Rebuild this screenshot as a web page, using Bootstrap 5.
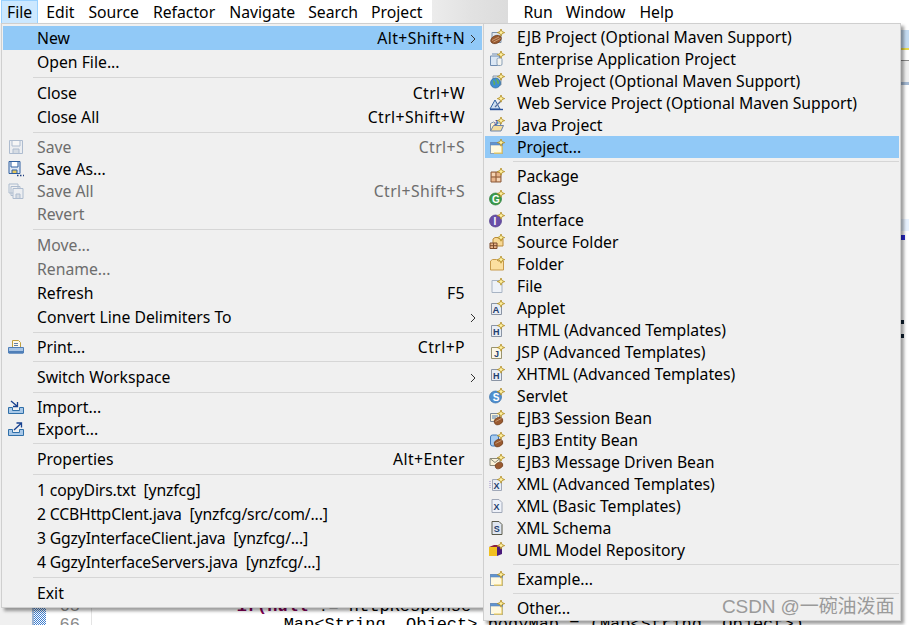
<!DOCTYPE html>
<html lang="en">
<head>
    <meta charset="UTF-8">
    <meta name="viewport" content="width=device-width, initial-scale=1.0">
    <title>Eclipse File Menu</title>
    <link href="https://cdn.jsdelivr.net/npm/bootstrap@5.3.0/dist/css/bootstrap.min.css" rel="stylesheet">
    <style>
        html, body { height: 100%; overflow: hidden; }
        body {
            background-color: #fff;
            color: #000;
            font-family: "Noto Sans", "Liberation Sans", sans-serif;
            font-size: 15.75px;
        }
        .stage { width: 909px; height: 625px; overflow: hidden; }

        /* menu bar */
        .menubar { height: 23px; background: #fff; line-height: 25px; }
        .bar-item { margin-left: 14px; white-space: nowrap; }
        .bar-tight { margin-left: 13px; }
        .bar-file {
            margin: 0 -6px 0 1px;
            padding: 0 5px;
            background: #cce8ff;
            border: 1px solid #99d1ff;
            border-bottom: 0;
            line-height: 23px;
            height: 23px;
        }
        .bar-gap { width: 76px; height: 23px; margin-left: 10px; margin-right: 1px; background: linear-gradient(90deg, #ececec, #e2e2e2 50%, #dcdcdc); }

        /* what is left of the workbench behind the menus */
        .bench { height: 602px; }
        .side-gray { width: 32px; background: #f0f0f0; }
        .side-dither {
            width: 14px;
            background-color: #fff;
            background-image: conic-gradient(#3f7fd0 25%, #fff 0 50%, #3f7fd0 0 75%, #fff 0);
            background-size: 2px 2px;
            border-left: 2px solid #9db4d2;
        }
        .gutter { width: 46px; border-right: 1px solid #e4e4e4; color: #8a8a8a; text-align: right; padding-right: 11px; }
        .code, .gutter { font-family: "Liberation Mono", monospace; font-size: 17px; line-height: 18px; margin-bottom: -9px; }
        .code { white-space: pre; overflow: hidden; padding-left: 8px; }
        .kw { color: #7f0055; font-weight: 700; margin-left: 4px; }
        .rstrip { width: 8px; flex: none; }
        .st-tab { height: 20px; margin-top: 7px; background: #c5dcf2; border-bottom: 2px solid #e8d94a; }
        .st-tool { height: 22px; background: #f0f0f0; border-top: 1px solid #8a8a8a; margin-top: 10px; }
        .st-edge { height: 3px; background: #a4b9d3; }
        .st-line { height: 12px; margin-top: 134px; background: #e8f2ff; }
        .st-mark { width: 4px; height: 5px; background: #2a2ad0; margin-top: 4px; }
        .st-dot { width: 3px; height: 4px; background: #123; margin-top: 80px; }
        .st-dot2 { width: 3px; height: 4px; background: #123; margin-top: 10px; }

        /* popups */
        .popup {
            position: absolute;
            top: 23px;
            background: #f0f0f0;
            border: 1px solid #cfcfcf;
            box-shadow: 3px 3px 3px rgba(0, 0, 0, .38);
            padding: 2px 1px;
        }
        .popup-file { left: 1px; width: 483px; height: 585px; }
        .popup-new { left: 483px; width: 418px; height: 598px; }
        .mrow { height: 24px; white-space: nowrap; }
        .mrow-i { height: 22px; white-space: nowrap; }
        .popup-file .mrow, .popup-file .mrow-i { padding-left: 5px; }
        .popup-new .mrow-i { padding-left: 4px; }
        .mico { width: 16px; height: 16px; flex: none; }
        .mslot { width: 16px; flex: none; }
        .mtext { margin-left: 13px; padding-top: 2px; }
        .popup-new .mtext { margin-left: 12px; }
        .mfile { letter-spacing: -.17px; }
        .mkey { margin-left: auto; padding-top: 2px; letter-spacing: .4px; }
        .marrow { width: 17px; flex: none; padding-left: 5px; }
        .mrow.sel, .mrow-i.sel { background: #91c9f7; }
        .off { color: #6d6d6d; }
        .off .mico { opacity: .45; }
        .msep { height: 7px; padding-top: 3px; margin-left: 30px; }
        .msep::before { content: ""; display: block; height: 1px; background: #d6d6d6; }
        .popup-new .msep { margin-left: 28px; }
        .icon-letter { font-family: "Liberation Sans", sans-serif; font-weight: 700; }
        .wmark {
            position: absolute;
            left: 722px;
            top: 593px;
            font-family: "Liberation Sans", "Noto Sans CJK SC", sans-serif;
            font-size: 19px;
            letter-spacing: -.1px;
            color: #9a9a9a;
            white-space: nowrap;
        }
    </style>
</head>
<body>
    <!-- icon sheet -->
    <svg width="0" height="0" class="position-absolute">
        <defs>
            <symbol id="star" viewBox="0 0 16 16"><path d="M12 0l1 2.600 2.700 1-2.700 1-1 2.600-1-2.600-2.700-1 2.700-1z" fill="#fff2a0" stroke="#b08a20" stroke-width=".8"/></symbol>
            <symbol id="bean" viewBox="0 0 16 16"><ellipse cx="7" cy="10.500" rx="5.500" ry="3.800" transform="rotate(-25 7 10.500)" fill="#9a5a30" stroke="#6a3a1a" stroke-width=".7"/><path d="M3 11.500l7-3.500M4.500 13l7-3.500" stroke="#d9b48f" stroke-width=".7"/></symbol>
            <symbol id="i-ejb" viewBox="0 0 16 16"><path d="M3 3.500h9v10H3z" fill="#dfe6ee" stroke="#7d90a8"/><use href="#bean"/><use href="#star"/></symbol>
            <symbol id="i-ear" viewBox="0 0 16 16"><path d="M1.500 5h9v9.500h-9z" fill="#dbe7f4" stroke="#6d8bb0"/><rect x="8" y="7" width="5" height="7.500" rx="1.500" fill="#f4f4f0" stroke="#8aa0b8"/><path d="M3 3h6" stroke="#6d8bb0"/><use href="#star"/></symbol>
            <symbol id="i-web" viewBox="0 0 16 16"><path d="M4 3h8v9H4z" fill="#e6e6e6" stroke="#8a98a8"/><circle cx="6.500" cy="10" r="5" fill="#3f8fd0" stroke="#2d6a9f" stroke-width=".7"/><path d="M4 7.500c2 1 2 3 1 4.500M7 6c2 1 3 3 2 5" fill="#6bb24a" stroke="#6bb24a"/><use href="#star"/></symbol>
            <symbol id="i-ws" viewBox="0 0 16 16"><path d="M1 14l5-9 5 9z" fill="#cfe0f2" stroke="#2f5f9f"/><path d="M1 14.500h13" stroke="#27509a" stroke-width="1.400"/><path d="M6 12l6-6" stroke="#5a6f9a" stroke-width="1.200"/><use href="#star"/></symbol>
            <symbol id="i-java" viewBox="0 0 16 16"><path d="M1.500 14V6.500l3-1.500 2 1h5v2" fill="#fff3cf" stroke="#7f90a8"/><path d="M1.500 14l3-5.500h10L12 14z" fill="#f5dc9a" stroke="#6d84a8"/><text x="5" y="7.500" class="icon-letter" font-size="7" fill="#1f4f9f">J</text><use href="#star"/></symbol>
            <symbol id="i-proj" viewBox="0 0 16 16"><rect x="1.500" y="3.500" width="12" height="11" fill="#fff9e0" stroke="#8aa0b8"/><path d="M1.500 3.500h12v2.500h-12z" fill="#5f94d0" stroke="#5f85b8" stroke-width=".6"/><path d="M13 7v7.200H5" fill="none" stroke="#e9c85a" stroke-width="1.200"/><use href="#star"/></symbol>
            <symbol id="i-pkg" viewBox="0 0 16 16"><path d="M2 4h10v10H2z" fill="#e8b48a" stroke="#8a5a3a"/><path d="M7 4v10M2 9h10" stroke="#8a5a3a"/><path d="M3 5h3v3H3zM8 10h3v3H8z" fill="#f4d4b4"/><use href="#star"/></symbol>
            <symbol id="i-class" viewBox="0 0 16 16"><circle cx="6.500" cy="9" r="6" fill="#3b9a4a" stroke="#2c7a3a" stroke-width=".7"/><text x="3" y="12.500" class="icon-letter" font-size="10" fill="#fff">G</text><use href="#star"/></symbol>
            <symbol id="i-iface" viewBox="0 0 16 16"><circle cx="6.500" cy="9" r="6" fill="#6a4fa8" stroke="#4f3a88" stroke-width=".7"/><text x="4.500" y="12.500" class="icon-letter" font-size="10" fill="#fff">I</text><use href="#star"/></symbol>
            <symbol id="i-src" viewBox="0 0 16 16"><path d="M4 12V5l2-1.500h3L10.500 5H14v7z" fill="#f7d894" stroke="#b98a3a"/><path d="M1 9h7v5.500H1z" fill="#e8b48a" stroke="#7a4a2a"/><path d="M4.500 9v5.500M1 11.700h7" stroke="#7a4a2a"/><use href="#star"/></symbol>
            <symbol id="i-folder" viewBox="0 0 16 16"><path d="M1.500 14V5l2-1.500h4L9 5h5.500v9z" fill="#fbdf9f" stroke="#c79a4a"/><use href="#star"/></symbol>
            <symbol id="i-file" viewBox="0 0 16 16"><path d="M3 2.500h7l3 3v9H3z" fill="#eef2f8" stroke="#a8b4c4"/><use href="#star"/></symbol>
            <symbol id="i-applet" viewBox="0 0 16 16"><path d="M2.500 3.500h10v11h-10z" fill="#e8edf4" stroke="#8a94a4"/><text x="3.500" y="12.500" class="icon-letter" font-size="9.500" fill="#24406f">A</text><use href="#star"/></symbol>
            <symbol id="i-html" viewBox="0 0 16 16"><path d="M2.500 3.500h10v11h-10z" fill="#e8edf4" stroke="#8a94a4"/><text x="4" y="12.500" class="icon-letter" font-size="9" fill="#24406f">H</text><use href="#star"/></symbol>
            <symbol id="i-jsp" viewBox="0 0 16 16"><path d="M2.500 3.500h10v11h-10z" fill="#fbf7e6" stroke="#9a9470"/><text x="5" y="12.500" class="icon-letter" font-size="9" fill="#24406f">J</text><use href="#star"/></symbol>
            <symbol id="i-servlet" viewBox="0 0 16 16"><circle cx="6.500" cy="9" r="6" fill="#4f8fd0" stroke="#3a70a8" stroke-width=".7"/><text x="3.700" y="12.700" class="icon-letter" font-size="10" fill="#fff">S</text><use href="#star"/></symbol>
            <symbol id="i-sess" viewBox="0 0 16 16"><path d="M1.500 3.500h9v8h-9z" fill="#fbf3d8" stroke="#7f8a98"/><path d="M3 6h6M3 8h4" stroke="#4f7fb8"/><ellipse cx="9.500" cy="11" rx="4.500" ry="3.500" transform="rotate(-25 9.500 11)" fill="#9a5a30" stroke="#6a3a1a" stroke-width=".6"/><path d="M6.500 11.500l6-3" stroke="#d9b48f" stroke-width=".7"/><use href="#star"/></symbol>
            <symbol id="i-ent" viewBox="0 0 16 16"><rect x="1.500" y="3" width="8" height="11" rx="2" fill="#a8ccf0" stroke="#3f78b8"/><ellipse cx="9.500" cy="11" rx="4.500" ry="3.500" transform="rotate(-25 9.500 11)" fill="#9a5a30" stroke="#6a3a1a" stroke-width=".6"/><path d="M6.500 11.500l6-3" stroke="#d9b48f" stroke-width=".7"/><use href="#star"/></symbol>
            <symbol id="i-msg" viewBox="0 0 16 16"><path d="M1 4.500h10v7H1z" fill="#fbf3d8" stroke="#8a8a7a"/><path d="M1 4.500l5 4 5-4" fill="none" stroke="#8a8a7a"/><ellipse cx="10" cy="11.500" rx="4" ry="3" transform="rotate(-25 10 11.500)" fill="#9a5a30" stroke="#6a3a1a" stroke-width=".6"/><use href="#star"/></symbol>
            <symbol id="i-xmla" viewBox="0 0 16 16"><path d="M3.500 3.500h9v11h-9z" fill="#e8edf4" stroke="#a0a8b8"/><path d="M1 5v8" stroke="#9a8ac8" stroke-dasharray="1 1"/><text x="4.500" y="12.500" class="icon-letter" font-size="9" fill="#24406f">X</text><use href="#star"/></symbol>
            <symbol id="i-xmlb" viewBox="0 0 16 16"><path d="M3 1.500h7l3 3v10H3z" fill="#eef1f8" stroke="#a0a8b8"/><text x="4.500" y="12" class="icon-letter" font-size="9" fill="#24406f">X</text></symbol>
            <symbol id="i-xsd" viewBox="0 0 16 16"><path d="M3 1.500h7l3 3v10H3z" fill="#dfe6f0" stroke="#5a5a4a"/><text x="4.700" y="12" class="icon-letter" font-size="9" fill="#24406f">S</text></symbol>
            <symbol id="i-uml" viewBox="0 0 16 16"><path d="M0 5h8v9H0z" fill="#f0c020"/><path d="M8 5l5-2v9l-5 2z" fill="#4a1a7a"/><path d="M0 5l5-2h8L8 5z" fill="#8a2040"/><use href="#star"/></symbol>
            <symbol id="i-save" viewBox="0 0 16 16"><path d="M1.500 1.500h13v13h-13z" fill="#e8edf4" stroke="#5f7fa8"/><path d="M4 2v5h8V2" fill="#fff" stroke="#5f7fa8"/><path d="M5 14v-4h6v4" fill="#b8c4d4" stroke="#5f7fa8"/></symbol>
            <symbol id="i-saveas" viewBox="0 0 16 16"><path d="M1 .500h11v12H1z" fill="#dfe8f4" stroke="#2f5f9f"/><path d="M3 1v5h7V1" fill="#fff" stroke="#2f5f9f"/><path d="M4 12V9h5v3" fill="#e9c85a" stroke="#2f5f9f"/><path d="M9 14.500h1.500M12 14.500h1.500M15 14.500h1" stroke="#1f3f7f" stroke-width="1.300"/></symbol>
            <symbol id="i-saveall" viewBox="0 0 16 16"><path d="M1 1h9v9H1zM3 3.500h9v9H3z" fill="#eef0f4" stroke="#5f7fa8"/><path d="M5 5.500h10v10H5z" fill="#e8edf4" stroke="#5f7fa8"/><path d="M8 15v-4h4v4" fill="#b8c4d4" stroke="#5f7fa8"/></symbol>
            <symbol id="i-print" viewBox="0 0 16 16"><path d="M4.500 1.500h6l2 2v5h-8z" fill="#fff9e8" stroke="#c0a040"/><path d="M6 4.500h4M6 6.500h4" stroke="#5f7fa8"/><path d="M.500 8.500h15v5.500h-15z" fill="#a8c4e4" stroke="#4f7fb8"/><path d="M1 12h14v2.500H1z" fill="#4f7fb8"/></symbol>
            <symbol id="i-imp" viewBox="0 0 16 16"><path d="M.500 8.500h4v3h7v-3h4v6h-15z" fill="#a8c8e8" stroke="#2f6fa8"/><path d="M3 2l6 5M9.500 3v4.500H5" fill="none" stroke="#17418f" stroke-width="1.300"/></symbol>
            <symbol id="i-exp" viewBox="0 0 16 16"><path d="M.500 8.500h4v3h7v-3h4v6h-15z" fill="#a8c8e8" stroke="#2f6fa8"/><path d="M6 9l7-6.500M8.500 2h5v4.500" fill="none" stroke="#17418f" stroke-width="1.300"/></symbol>
        </defs>
    </svg>

    <div class="stage position-relative">
        <div class="menubar d-flex">
            <div class="bar-file">File</div>
            <div class="bar-item">Edit</div>
            <div class="bar-item">Source</div>
            <div class="bar-item">Refactor</div>
            <div class="bar-item">Navigate</div>
            <div class="bar-item bar-tight">Search</div>
            <div class="bar-item bar-tight">Project</div>
            <div class="bar-gap"></div>
            <div class="bar-item">Run</div>
            <div class="bar-item bar-tight">Window</div>
            <div class="bar-item">Help</div>
        </div>

        <div class="bench d-flex">
            <div class="side-gray"></div>
            <div class="side-dither"></div>
            <div class="gutter d-flex flex-column justify-content-end">
                <div>65</div>
                <div>66</div>
            </div>
            <div class="code flex-grow-1 d-flex flex-column justify-content-end">
                <div>             <span class="kw">if(null</span> != httpResponse</div>
                <div>                  Map&lt;String, Object&gt; bodyMap = (Map&lt;String, Object&gt;)</div>
            </div>
            <div class="rstrip">
                <div class="st-tab"></div>
                <div class="st-tool"></div>
                <div class="st-edge"></div>
                <div class="st-line"></div>
                <div class="st-mark"></div>
                <div class="st-dot"></div>
                <div class="st-dot2"></div>
            </div>
        </div>

        <div class="popup popup-file">
            <div class="mrow sel d-flex align-items-center"><span class="mslot"></span><span class="mtext">New</span><span class="mkey">Alt+Shift+N</span><span class="marrow"><svg width="6" height="10" viewBox="0 0 6 10"><path d="M1 1l4 4-4 4" fill="none" stroke="#333"/></svg></span></div>
            <div class="mrow d-flex align-items-center"><span class="mslot"></span><span class="mtext">Open File...</span></div>
            <div class="msep"></div>
            <div class="mrow d-flex align-items-center"><span class="mslot"></span><span class="mtext">Close</span><span class="mkey">Ctrl+W</span><span class="marrow"></span></div>
            <div class="mrow d-flex align-items-center"><span class="mslot"></span><span class="mtext">Close All</span><span class="mkey">Ctrl+Shift+W</span><span class="marrow"></span></div>
            <div class="msep"></div>
            <div class="mrow-i off d-flex align-items-center"><svg class="mico"><use href="#i-save"/></svg><span class="mtext">Save</span><span class="mkey">Ctrl+S</span><span class="marrow"></span></div>
            <div class="mrow-i d-flex align-items-center"><svg class="mico"><use href="#i-saveas"/></svg><span class="mtext">Save As...</span></div>
            <div class="mrow-i off d-flex align-items-center"><svg class="mico"><use href="#i-saveall"/></svg><span class="mtext">Save All</span><span class="mkey">Ctrl+Shift+S</span><span class="marrow"></span></div>
            <div class="mrow off d-flex align-items-center"><span class="mslot"></span><span class="mtext">Revert</span></div>
            <div class="msep"></div>
            <div class="mrow off d-flex align-items-center"><span class="mslot"></span><span class="mtext">Move...</span></div>
            <div class="mrow off d-flex align-items-center"><span class="mslot"></span><span class="mtext">Rename...</span></div>
            <div class="mrow d-flex align-items-center"><span class="mslot"></span><span class="mtext">Refresh</span><span class="mkey">F5</span><span class="marrow"></span></div>
            <div class="mrow d-flex align-items-center"><span class="mslot"></span><span class="mtext">Convert Line Delimiters To</span><span class="mkey"></span><span class="marrow"><svg width="6" height="10" viewBox="0 0 6 10"><path d="M1 1l4 4-4 4" fill="none" stroke="#333"/></svg></span></div>
            <div class="msep"></div>
            <div class="mrow-i d-flex align-items-center"><svg class="mico"><use href="#i-print"/></svg><span class="mtext">Print...</span><span class="mkey">Ctrl+P</span><span class="marrow"></span></div>
            <div class="msep"></div>
            <div class="mrow d-flex align-items-center"><span class="mslot"></span><span class="mtext">Switch Workspace</span><span class="mkey"></span><span class="marrow"><svg width="6" height="10" viewBox="0 0 6 10"><path d="M1 1l4 4-4 4" fill="none" stroke="#333"/></svg></span></div>
            <div class="msep"></div>
            <div class="mrow-i d-flex align-items-center"><svg class="mico"><use href="#i-imp"/></svg><span class="mtext">Import...</span></div>
            <div class="mrow-i d-flex align-items-center"><svg class="mico"><use href="#i-exp"/></svg><span class="mtext">Export...</span></div>
            <div class="msep"></div>
            <div class="mrow d-flex align-items-center"><span class="mslot"></span><span class="mtext">Properties</span><span class="mkey">Alt+Enter</span><span class="marrow"></span></div>
            <div class="msep"></div>
            <div class="mrow d-flex align-items-center"><span class="mslot"></span><span class="mtext mfile">1 copyDirs.txt&nbsp; [ynzfcg]</span></div>
            <div class="mrow d-flex align-items-center"><span class="mslot"></span><span class="mtext mfile">2 CCBHttpClent.java&nbsp; [ynzfcg/src/com/...]</span></div>
            <div class="mrow d-flex align-items-center"><span class="mslot"></span><span class="mtext mfile">3 GgzyInterfaceClient.java&nbsp; [ynzfcg/...]</span></div>
            <div class="mrow d-flex align-items-center"><span class="mslot"></span><span class="mtext mfile">4 GgzyInterfaceServers.java&nbsp; [ynzfcg/...]</span></div>
            <div class="msep"></div>
            <div class="mrow d-flex align-items-center"><span class="mslot"></span><span class="mtext">Exit</span></div>
        </div>

        <div class="popup popup-new">
            <div class="mrow-i d-flex align-items-center"><svg class="mico"><use href="#i-ejb"/></svg><span class="mtext">EJB Project (Optional Maven Support)</span></div>
            <div class="mrow-i d-flex align-items-center"><svg class="mico"><use href="#i-ear"/></svg><span class="mtext">Enterprise Application Project</span></div>
            <div class="mrow-i d-flex align-items-center"><svg class="mico"><use href="#i-web"/></svg><span class="mtext">Web Project (Optional Maven Support)</span></div>
            <div class="mrow-i d-flex align-items-center"><svg class="mico"><use href="#i-ws"/></svg><span class="mtext">Web Service Project (Optional Maven Support)</span></div>
            <div class="mrow-i d-flex align-items-center"><svg class="mico"><use href="#i-java"/></svg><span class="mtext">Java Project</span></div>
            <div class="mrow-i sel d-flex align-items-center"><svg class="mico"><use href="#i-proj"/></svg><span class="mtext">Project...</span></div>
            <div class="msep"></div>
            <div class="mrow-i d-flex align-items-center"><svg class="mico"><use href="#i-pkg"/></svg><span class="mtext">Package</span></div>
            <div class="mrow-i d-flex align-items-center"><svg class="mico"><use href="#i-class"/></svg><span class="mtext">Class</span></div>
            <div class="mrow-i d-flex align-items-center"><svg class="mico"><use href="#i-iface"/></svg><span class="mtext">Interface</span></div>
            <div class="mrow-i d-flex align-items-center"><svg class="mico"><use href="#i-src"/></svg><span class="mtext">Source Folder</span></div>
            <div class="mrow-i d-flex align-items-center"><svg class="mico"><use href="#i-folder"/></svg><span class="mtext">Folder</span></div>
            <div class="mrow-i d-flex align-items-center"><svg class="mico"><use href="#i-file"/></svg><span class="mtext">File</span></div>
            <div class="mrow-i d-flex align-items-center"><svg class="mico"><use href="#i-applet"/></svg><span class="mtext">Applet</span></div>
            <div class="mrow-i d-flex align-items-center"><svg class="mico"><use href="#i-html"/></svg><span class="mtext">HTML (Advanced Templates)</span></div>
            <div class="mrow-i d-flex align-items-center"><svg class="mico"><use href="#i-jsp"/></svg><span class="mtext">JSP (Advanced Templates)</span></div>
            <div class="mrow-i d-flex align-items-center"><svg class="mico"><use href="#i-html"/></svg><span class="mtext">XHTML (Advanced Templates)</span></div>
            <div class="mrow-i d-flex align-items-center"><svg class="mico"><use href="#i-servlet"/></svg><span class="mtext">Servlet</span></div>
            <div class="mrow-i d-flex align-items-center"><svg class="mico"><use href="#i-sess"/></svg><span class="mtext">EJB3 Session Bean</span></div>
            <div class="mrow-i d-flex align-items-center"><svg class="mico"><use href="#i-ent"/></svg><span class="mtext">EJB3 Entity Bean</span></div>
            <div class="mrow-i d-flex align-items-center"><svg class="mico"><use href="#i-msg"/></svg><span class="mtext">EJB3 Message Driven Bean</span></div>
            <div class="mrow-i d-flex align-items-center"><svg class="mico"><use href="#i-xmla"/></svg><span class="mtext">XML (Advanced Templates)</span></div>
            <div class="mrow-i d-flex align-items-center"><svg class="mico"><use href="#i-xmlb"/></svg><span class="mtext">XML (Basic Templates)</span></div>
            <div class="mrow-i d-flex align-items-center"><svg class="mico"><use href="#i-xsd"/></svg><span class="mtext">XML Schema</span></div>
            <div class="mrow-i d-flex align-items-center"><svg class="mico"><use href="#i-uml"/></svg><span class="mtext">UML Model Repository</span></div>
            <div class="msep"></div>
            <div class="mrow-i d-flex align-items-center"><svg class="mico"><use href="#i-proj"/></svg><span class="mtext">Example...</span></div>
            <div class="msep"></div>
            <div class="mrow-i d-flex align-items-center"><svg class="mico"><use href="#i-proj"/></svg><span class="mtext">Other...</span></div>
        </div>

        <div class="wmark">CSDN @一碗油泼面</div>
    </div>

    <script src="https://cdn.jsdelivr.net/npm/bootstrap@5.3.0/dist/js/bootstrap.bundle.min.js"></script>
</body>
</html>
